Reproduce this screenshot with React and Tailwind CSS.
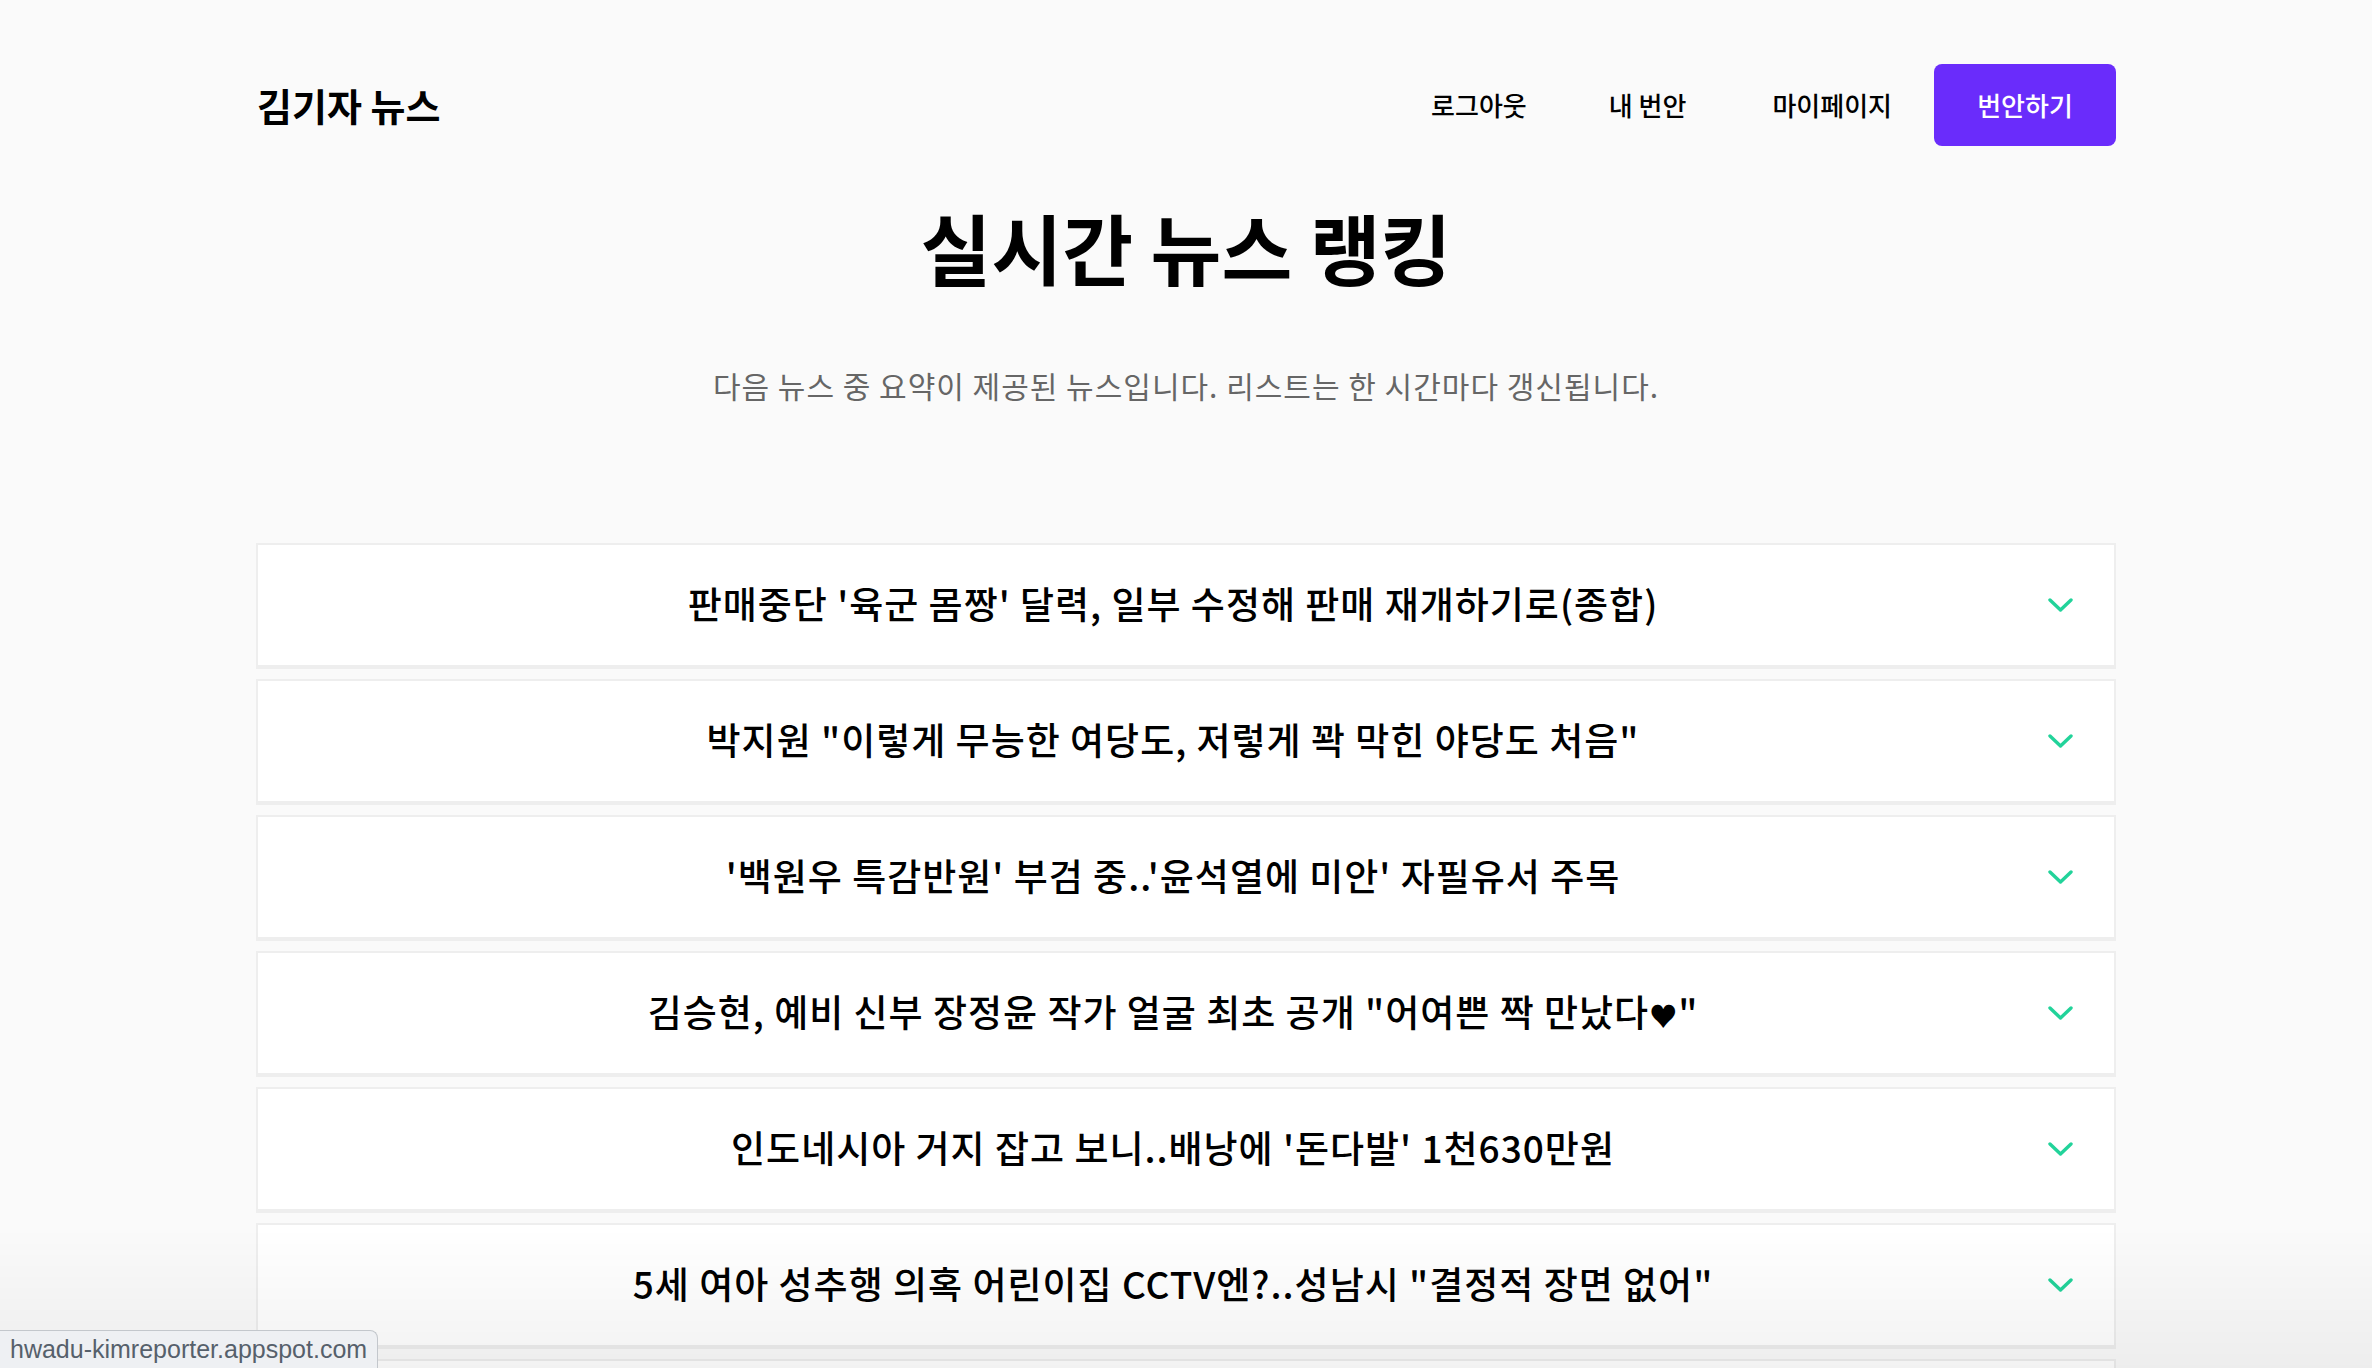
import React from "react";

const items = [
  "판매중단 '육군 몸짱' 달력, 일부 수정해 판매 재개하기로(종합)",
  "박지원 \"이렇게 무능한 여당도, 저렇게 꽉 막힌 야당도 처음\"",
  "'백원우 특감반원' 부검 중..'윤석열에 미안' 자필유서 주목",
  <>
    김승현, 예비 신부 장정윤 작가 얼굴 최초 공개 "어여쁜 짝 만났다<span className="text-[28px]">♥</span>"
  </>,
  "인도네시아 거지 잡고 보니..배낭에 '돈다발' 1천630만원",
  "5세 여아 성추행 의혹 어린이집 CCTV엔?..성남시 \"결정적 장면 없어\"",
  "검찰, 청와대 압수수색..'유재수 감찰 무마' 의혹 수사",
];

function Chevron() {
  return (
    <svg width="25" height="14" viewBox="0 0 25 14" fill="none" className="shrink-0">
      <polyline
        points="2,2 12.5,12 23,2"
        stroke="#22d39a"
        strokeWidth="3.4"
        strokeLinecap="round"
        strokeLinejoin="round"
      />
    </svg>
  );
}

export default function App() {
  return (
    <div className="min-h-screen bg-[#fafafa] font-['Noto_Sans_CJK_KR',sans-serif] text-black">
      <div className="mx-auto w-[1860px] pt-[64px]">
        <header className="flex h-[82px] items-center justify-between">
          <div className="pl-[1px] text-[38px] font-bold leading-none">김기자 뉴스</div>
          <nav className="flex items-center">
            <a className="text-[26px] font-medium leading-none">로그아웃</a>
            <a className="ml-[82px] text-[26px] font-medium leading-none">내 번안</a>
            <a className="ml-[86px] text-[26px] font-medium leading-none">마이페이지</a>
            <button className="ml-[42px] flex h-[82px] w-[182px] items-center justify-center rounded-[8px] bg-[#6a2cfb] text-[26px] font-medium leading-none text-white">
              번안하기
            </button>
          </nav>
        </header>

        <h1 className="mt-[62px] text-center text-[77px] font-bold leading-none">실시간 뉴스 랭킹</h1>

        <p className="mt-[85px] text-center text-[30px] leading-none tracking-[1px] text-[#666]">
          다음 뉴스 중 요약이 제공된 뉴스입니다. 리스트는 한 시간마다 갱신됩니다.
        </p>

        <ul className="mt-[143px] flex flex-col gap-[10px] pb-[40px]">
          {items.map((t, i) => (
            <li
              key={i}
              className="flex h-[126px] items-center border-2 border-b-4 border-[#eeeeee] bg-white pl-[40px] pr-[41px]"
            >
              <span className="flex-1 pb-[4px] text-center text-[37px] font-medium leading-none tracking-[1px]">{t}</span>
              <Chevron />
            </li>
          ))}
        </ul>
      </div>

      <div className="pointer-events-none fixed inset-x-0 bottom-0 h-[140px] bg-linear-to-b from-transparent to-black/[0.05]" />

      <div className="fixed bottom-0 left-0 flex h-[38px] w-[378px] items-center rounded-tr-[8px] border-t border-r border-[#c3c7cc] bg-[#eef0f3] pl-[10px] font-['Liberation_Sans',sans-serif] text-[25px] leading-none text-[#56606b]">
        hwadu-kimreporter.appspot.com
      </div>
    </div>
  );
}
